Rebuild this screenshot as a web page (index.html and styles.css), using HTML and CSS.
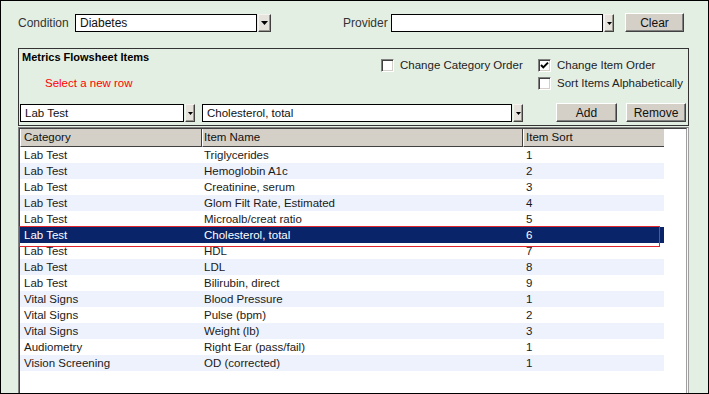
FILE: index.html
```html
<!DOCTYPE html>
<html>
<head>
<meta charset="utf-8">
<link rel="stylesheet" href="styles.css">
</head>
<body>
<div class="window">
  <div class="toprow">
    <span class="lbl lbl-cond">Condition</span>
    <div class="combo">
      <div class="cbox cbox-cond">Diabetes</div>
      <div class="cbtn cbtn-wide"><svg width="7" height="4" viewBox="0 0 7 4"><polygon points="0,0 7,0 3.5,4" fill="#000"/></svg></div>
    </div>
    <span class="lbl lbl-prov">Provider</span>
    <div class="combo">
      <div class="cbox cbox-prov"></div>
      <div class="cbtn"><svg width="5" height="3" viewBox="0 0 5 3"><polygon points="0,0 5,0 2.5,3" fill="#000"/></svg></div>
    </div>
    <button class="btn btn-clear">Clear</button>
  </div>

  <div class="group">
    <div class="ghead">
      <div class="gleft">
        <div class="gtitle">Metrics Flowsheet Items</div>
        <div class="ghint">Select a new row</div>
      </div>
      <div class="gchecks">
        <div class="chkcol chkcol-a">
          <div class="chk"><span class="box"></span><span>Change Category Order</span></div>
        </div>
        <div class="chkcol">
          <div class="chk"><span class="box"><svg width="11" height="11" viewBox="0 0 11 11"><path d="M2 5 L4.3 7.4 L9 2.6" fill="none" stroke="#000" stroke-width="2"/></svg></span><span>Change Item Order</span></div>
          <div class="chk"><span class="box"></span><span>Sort Items Alphabetically</span></div>
        </div>
      </div>
    </div>
    <div class="gfoot">
      <div class="combo combo-foot">
        <div class="cbox cbox-lab">Lab Test</div>
        <div class="cbtn"><svg width="5" height="3" viewBox="0 0 5 3"><polygon points="0,0 5,0 2.5,3" fill="#000"/></svg></div>
      </div>
      <div class="combo combo-foot">
        <div class="cbox cbox-item">Cholesterol, total</div>
        <div class="cbtn"><svg width="5" height="3" viewBox="0 0 5 3"><polygon points="0,0 5,0 2.5,3" fill="#000"/></svg></div>
      </div>
      <button class="btn btn-add">Add</button>
      <button class="btn btn-remove">Remove</button>
    </div>
  </div>

  <div class="grid">
    <div class="grid-in">
      <div class="ghdr">
        <div class="hc hc1">Category</div>
        <div class="hc hc2">Item Name</div>
        <div class="hc hc3">Item Sort</div>
      </div>
      <div class="row"><div class="c1">Lab Test</div><div class="c2">Triglycerides</div><div class="c3">1</div></div>
      <div class="row alt"><div class="c1">Lab Test</div><div class="c2">Hemoglobin A1c</div><div class="c3">2</div></div>
      <div class="row"><div class="c1">Lab Test</div><div class="c2">Creatinine, serum</div><div class="c3">3</div></div>
      <div class="row alt"><div class="c1">Lab Test</div><div class="c2">Glom Filt Rate, Estimated</div><div class="c3">4</div></div>
      <div class="row"><div class="c1">Lab Test</div><div class="c2">Microalb/creat ratio</div><div class="c3">5</div></div>
      <div class="row sel"><div class="c1">Lab Test</div><div class="c2">Cholesterol, total</div><div class="c3">6</div></div>
      <div class="row"><div class="c1">Lab Test</div><div class="c2">HDL</div><div class="c3">7</div></div>
      <div class="row alt"><div class="c1">Lab Test</div><div class="c2">LDL</div><div class="c3">8</div></div>
      <div class="row"><div class="c1">Lab Test</div><div class="c2">Bilirubin, direct</div><div class="c3">9</div></div>
      <div class="row alt"><div class="c1">Vital Signs</div><div class="c2">Blood Pressure</div><div class="c3">1</div></div>
      <div class="row"><div class="c1">Vital Signs</div><div class="c2">Pulse (bpm)</div><div class="c3">2</div></div>
      <div class="row alt"><div class="c1">Vital Signs</div><div class="c2">Weight (lb)</div><div class="c3">3</div></div>
      <div class="row"><div class="c1">Audiometry</div><div class="c2">Right Ear (pass/fail)</div><div class="c3">1</div></div>
      <div class="row alt"><div class="c1">Vision Screening</div><div class="c2">OD (corrected)</div><div class="c3">1</div></div>
    </div>
  </div>
</div>
</body>
</html>
```

FILE: styles.css
```css
* { box-sizing: border-box; }
html, body { margin: 0; padding: 0; }
body { background: #e4efe4; }

.window {
  width: 709px;
  height: 394px;
  border: 1px solid #000;
  background: #e4efe4;
  overflow: hidden;
  padding-left: 17px;
  font-family: "Liberation Sans", Arial, sans-serif;
  font-size: 12px;
  color: #222;
}

/* top row */
.toprow {
  display: flex;
  align-items: center;
  height: 18px;
  margin-top: 13px;
}
.toprow > *, .gfoot > *, .combo > *, .ghead > *, .gchecks > * { flex-shrink: 0; }
.lbl { color: #333; font-size: 12px; line-height: 18px; }
.lbl-cond { width: 57px; }
.lbl-prov { width: 48px; margin-left: 72px; }

.combo { display: flex; height: 18px; }
.cbox {
  height: 18px;
  border: 1px solid #000;
  background: #fff;
  padding-left: 4px;
  line-height: 16px;
  font-size: 11.5px;
  color: #111;
  white-space: nowrap;
  overflow: hidden;
}
.cbox-cond { width: 182px; font-size: 12px; }
.cbox-prov { width: 212px; }
.cbtn {
  width: 10px;
  min-width: 10px;
  height: 18px;
  margin-left: 1px;
  background: #e6e3dc;
  border: 1px solid;
  border-color: #f4f3ef #404040 #404040 #f4f3ef;
  box-shadow: inset -1px -1px 0 #9a988f;
  display: flex;
  align-items: center;
  justify-content: center;
  padding: 0;
}
.cbtn svg { display: block; flex: none; }
.cbtn-wide { width: 13px; min-width: 13px; }

.btn {
  font-family: "Liberation Sans", Arial, sans-serif;
  font-size: 12px;
  color: #111;
  background: #d4d0c8;
  border: 1px solid;
  border-color: #fff #404040 #404040 #fff;
  box-shadow: inset -1px -1px 0 #808080;
  padding: 0;
  height: 19px;
  line-height: 16px;
  margin: 0;
}
.btn-clear { width: 59px; margin-left: 11px; align-self: flex-start; margin-top: -1px; }

/* group box */
.group {
  width: 671px;
  height: 78px;
  margin-top: 16px;
  border: 1px solid #333;
  display: flex;
  flex-direction: column;
}
.ghead { display: flex; height: 54px; }
.gleft { width: 362px; }
.gtitle {
  font-weight: bold;
  font-size: 11px;
  line-height: 14px;
  padding: 1px 0 0 3px;
  color: #000;
}
.ghint {
  color: #f00;
  font-size: 11.5px;
  line-height: 14px;
  margin: 12px 0 0 26px;
}
.gchecks { display: flex; padding-top: 7px; }
.chkcol { display: flex; flex-direction: column; }
.chkcol-a { width: 157px; }
.chk {
  display: flex;
  align-items: center;
  height: 18px;
  font-size: 11.5px;
  color: #222;
  white-space: nowrap;
}
.box {
  width: 13px;
  height: 13px;
  flex: none;
  background: #fff;
  border: 1px solid;
  border-color: #808080 #fff #fff #808080;
  box-shadow: inset 1px 1px 0 #404040, inset -1px -1px 0 #d4d0c8;
  margin-right: 6px;
  display: flex;
  align-items: center;
  justify-content: center;
}
.box svg { display: block; }

.gfoot {
  display: flex;
  align-items: flex-end;
  height: 19px;
  padding-left: 1px;
}
.combo-foot { margin-right: 7px; }
.cbox-lab { width: 164px; }
.cbox-item { width: 310px; }
.combo-foot + .combo-foot { margin-right: 33px; }
.btn-add { width: 61px; }
.btn-remove { width: 60px; margin-left: 9px; }

/* grid */
.grid {
  width: 671px;
  height: 300px;
  margin-top: 1px;
  border: 1px solid #808080;
  border-right-color: #a0a0a0;
  background: #fafafa;
  padding-right: 1px;
}
.grid-in {
  height: 100%;
  background: #fff;
  border-top: 1px solid #404040;
  border-left: 1px solid #404040;
  border-right: 1px solid #a0a0a0;
  font-size: 11.5px;
  color: #1a1a1a;
}
.ghdr { display: flex; height: 18px; width: 644px; }
.hc {
  background: #d4d0c8;
  border-left: 1px solid #fff;
  border-right: 1px solid #404040;
  border-bottom: 1px solid #404040;
  line-height: 16px;
  color: #111;
  white-space: nowrap;
}
.hc1 { width: 182px; padding-left: 3px; }
.hc2 { width: 321px; padding-left: 1px; }
.hc3 { width: 141px; padding-left: 2px; border-right: none; }

.row {
  display: flex;
  width: 644px;
  height: 16px;
  line-height: 16px;
  white-space: nowrap;
  position: relative;
}
.row.alt { background: #eef2fd; }
.row.sel { background: #0a246a; color: #fff; }
.row.sel::after {
  content: "";
  position: absolute;
  left: -1px;
  top: -1px;
  width: 639px;
  height: 19px;
  border: 1px solid #e0262c;
}
.c1 { width: 182px; padding-left: 4px; }
.c2 { width: 321px; padding-left: 2px; }
.c3 { width: 141px; padding-left: 3px; }
```
